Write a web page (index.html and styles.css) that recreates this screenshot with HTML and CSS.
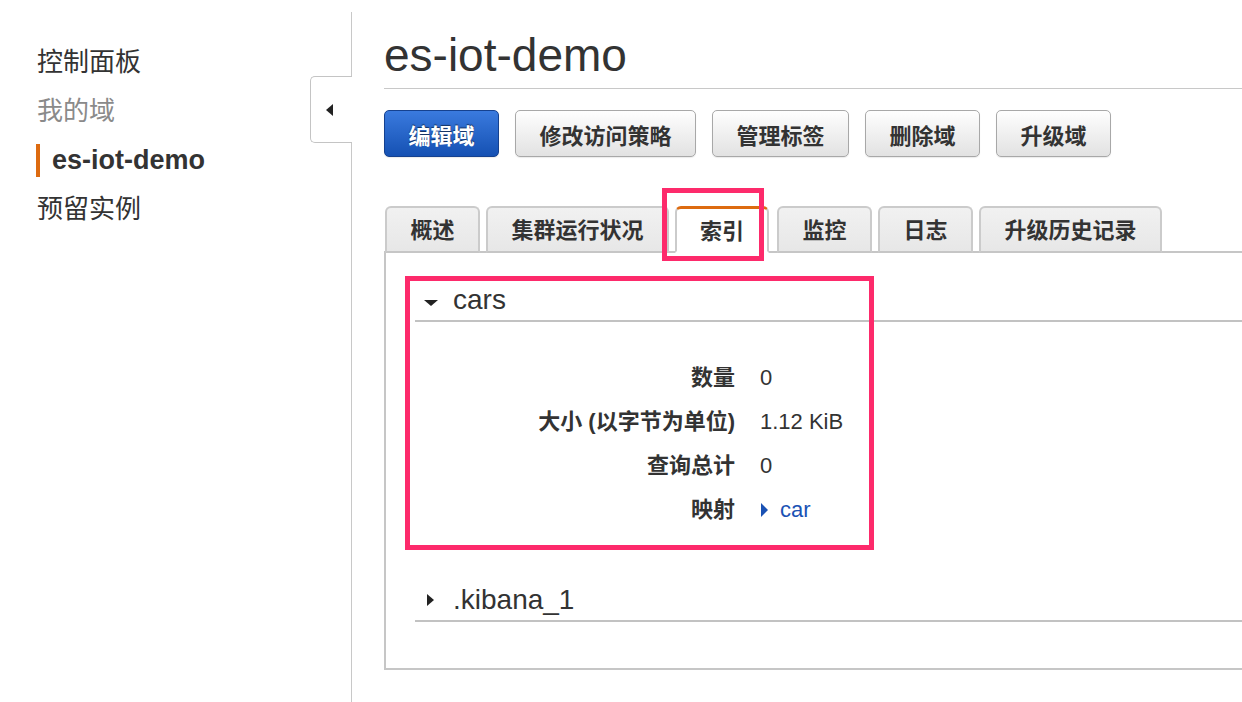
FILE: index.html
```html
<!DOCTYPE html>
<html lang="zh-CN">
<head>
<meta charset="utf-8">
<title>es-iot-demo</title>
<link rel="stylesheet" href="styles.css">
</head>
<body>
<div class="page">
  <aside class="sidebar">
    <nav class="nav">
      <div class="nav-item">控制面板</div>
      <div class="nav-item muted">我的域</div>
      <div class="nav-item active">es-iot-demo</div>
      <div class="nav-item">预留实例</div>
    </nav>
    <div class="collapse"><span class="arrow-left"></span></div>
  </aside>
  <main class="main">
    <h1 class="title">es-iot-demo</h1>
    <div class="actions">
      <button class="btn primary">编辑域</button>
      <button class="btn">修改访问策略</button>
      <button class="btn">管理标签</button>
      <button class="btn">删除域</button>
      <button class="btn">升级域</button>
    </div>
    <div class="tabs">
      <div class="tab">概述</div>
      <div class="tab">集群运行状况</div>
      <div class="tab selected">索引</div>
      <div class="tab">监控</div>
      <div class="tab">日志</div>
      <div class="tab">升级历史记录</div>
    </div>
    <section class="panel">
      <div class="index-head"><span class="tri-down"></span><span class="index-name">cars</span></div>
      <dl class="details">
        <dt>数量</dt><dd>0</dd>
        <dt>大小 (以字节为单位)</dt><dd>1.12 KiB</dd>
        <dt>查询总计</dt><dd>0</dd>
        <dt>映射</dt><dd><a class="link"><span class="tri-right blue"></span>car</a></dd>
      </dl>
      <div class="index-head collapsed"><span class="tri-right"></span><span class="index-name">.kibana_1</span></div>
    </section>
  </main>
  <div class="mark mark-tab"></div>
  <div class="mark mark-index"></div>
</div>
</body>
</html>
```

FILE: styles.css
```css
* { box-sizing: border-box; }
html, body { margin: 0; padding: 0; background: #fff; }
body {
  font-family: "Liberation Sans", "Noto Sans CJK SC", sans-serif;
  color: #333;
  width: 1242px;
  height: 702px;
  overflow: hidden;
}
.page {
  position: relative;
  display: flex;
  height: 702px;
}
.sidebar {
  position: relative;
  width: 352px;
  flex: none;
  margin-top: 12px;
  border-right: 1px solid #c8c8c8;
}
.nav { padding: 26px 0 0 36px; }
.nav-item {
  font-size: 26px;
  line-height: 49px;
  height: 49px;
  padding-left: 1px;
}
.nav-item.muted { color: #8a8a8a; }
.nav-item.active {
  font-weight: bold;
  font-size: 27px;
  border-left: 4px solid #dd6b10;
  padding-left: 12px;
  line-height: 33px;
  height: 33px;
  margin: 8px 0;
}
.collapse {
  position: absolute;
  top: 64px;
  right: -1px;
  width: 42px;
  height: 67px;
  background: #fff;
  border: 1px solid #c4c4c4;
  border-right: none;
  border-radius: 5px 0 0 5px;
  display: flex;
  align-items: center;
  justify-content: center;
}
.arrow-left {
  width: 0; height: 0;
  border-top: 6px solid transparent;
  border-bottom: 6px solid transparent;
  border-right: 7px solid #222;
  margin-left: -4px;
}
.main {
  flex: 1;
  min-width: 0;
  padding-left: 32px;
  overflow: hidden;
}
.title {
  margin: 29px 0 0;
  font-size: 46px;
  font-weight: normal;
  line-height: 52px;
  color: #333;
  padding-bottom: 7px;
  border-bottom: 1px solid #c8c8c8;
}
.actions {
  display: flex;
  gap: 16px;
  margin-top: 21px;
}
.btn {
  font-family: inherit;
  font-size: 22px;
  font-weight: bold;
  height: 47px;
  padding: 0 23.5px;
  color: #333;
  background: linear-gradient(#fefefe, #e2e2e2);
  border: 1px solid #a8a8a8;
  border-radius: 5px;
  box-shadow: 0 1px 1px rgba(0,0,0,0.08);
}
.btn.primary {
  color: #fff;
  background: linear-gradient(#3a7ade, #1551b3);
  border-color: #15418f;
  text-shadow: 0 -1px 1px rgba(0,0,0,0.55);
}
.tabs {
  display: flex;
  align-items: flex-end;
  gap: 6px;
  margin-top: 49px;
  margin-right: -10px;
  padding-left: 1px;
  border-bottom: 2px solid #c6c6c6;
  height: 47px;
}
.tab {
  height: 47px;
  margin-bottom: -2px;
  padding: 0 23.5px;
  font-size: 22px;
  font-weight: bold;
  line-height: 46px;
  color: #333;
  background: linear-gradient(#f1f1f1, #e7e7e7);
  border: 2px solid #cbcbcb;
  border-bottom: 2px solid #c6c6c6;
  border-radius: 6px 6px 0 0;
}
.tab.selected {
  background: #fff;
  border-top: 3px solid #dd6b10;
  border-bottom-color: #fff;
  line-height: 45px;
  padding: 0 23px;
  margin-right: 2px;
}
.panel {
  margin-right: -10px;
  border-left: 2px solid #c6c6c6;
  border-bottom: 2px solid #c6c6c6;
  padding: 27px 0 46px 29px;
}
.index-head {
  display: flex;
  align-items: center;
  height: 42px;
  border-bottom: 2px solid #c2c2c2;
  padding-left: 9px;
}
.index-name {
  font-size: 28px;
  line-height: 40px;
  color: #333;
}
.tri-down {
  width: 0; height: 0;
  border-left: 7px solid transparent;
  border-right: 7px solid transparent;
  border-top: 6px solid #222;
  margin: 6px 15px 0 0;
}
.tri-right {
  width: 0; height: 0;
  border-top: 6px solid transparent;
  border-bottom: 6px solid transparent;
  border-left: 7px solid #222;
  margin: 0 19px 0 3px;
}
.details {
  display: grid;
  grid-template-columns: 320px auto;
  column-gap: 25px;
  margin: 34px 0 48px;
  font-size: 22px;
  line-height: 44px;
}
.details dt {
  text-align: right;
  font-weight: bold;
  color: #333;
}
.details dd { margin: 0; color: #333; }
.link {
  color: #1a52b4;
  display: inline-flex;
  align-items: center;
}
.tri-right.blue {
  border-left-color: #1a52b4;
  border-top-width: 7px;
  border-bottom-width: 7px;
  margin: 0 12px 0 1px;
}
.mark {
  position: absolute;
  border: 5px solid #fd2a6b;
  pointer-events: none;
}
.mark-tab { left: 662px; top: 188px; width: 102px; height: 73px; }
.mark-index { left: 405px; top: 276px; width: 469px; height: 274px; }
```
